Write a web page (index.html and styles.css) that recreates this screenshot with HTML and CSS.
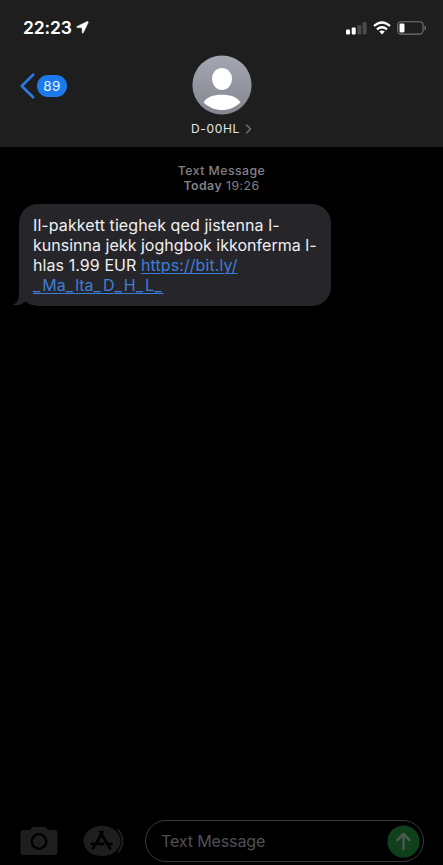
FILE: index.html
```html
<!DOCTYPE html>
<html lang="mt">
<head>
<meta charset="utf-8">
<title>Messages</title>
<link rel="stylesheet" href="styles.css">
</head>
<body>
<div class="phone">
  <header class="header">
    <div class="status">
      <span class="time">22:23</span>
      <svg class="location" width="13" height="13" viewBox="0 0 13 13"><path d="M11.2.6 1 5.400q-1 .8.1 1l4.900.3.3 5q.2 1.200 1 .1L12.200 1.600q.3-1.300-1-1z" fill="#fff" stroke="#fff" stroke-width=".5"/></svg>
      <svg class="signal" width="21" height="14" viewBox="0 0 21 14"><rect x="0" y="8.6" width="4" height="5" rx="1" fill="#fff"/><rect x="5.7" y="6.6" width="4" height="7" rx="1" fill="#fff"/><rect x="11.3" y="4" width="4" height="9.6" rx="1" fill="#4a4a4c"/><rect x="16.6" y="1" width="4" height="12.6" rx="1" fill="#4a4a4c"/></svg>
      <svg class="wifi" width="18" height="14" viewBox="0 0 18 14"><g fill="none" stroke="#fff" stroke-width="2.3"><path d="M1 5Q9-2 17 5"/><path d="M4 8.3q5-4.2 10 0"/></g><path d="M6.2 10.6Q9 8.3 11.8 10.6L9 13.5z" fill="#fff"/></svg>
      <svg class="battery" width="30" height="14" viewBox="0 0 30 14"><rect x=".7" y=".7" width="25.4" height="12.4" rx="3.6" fill="none" stroke="#77777a" stroke-width="1.1"/><rect x="2.5" y="2.4" width="5" height="9" rx="1.4" fill="#fff"/><path d="M27.5 4.5q1.6.8 1.6 2.4t-1.6 2.4z" fill="#77777a"/></svg>
    </div>
    <div class="nav">
      <div class="back">
        <svg width="16" height="26" viewBox="0 0 16 26"><path d="M13.1 1.8 1.8 13l11.3 11.2" fill="none" stroke="#2a78e0" stroke-width="2.7" stroke-linecap="round" stroke-linejoin="round"/></svg>
        <span class="badge">89</span>
      </div>
      <div class="contact">
        <svg width="60" height="60" viewBox="0 0 60 60">
          <defs><linearGradient id="g" x1="0" y1="0" x2="0" y2="1"><stop offset="0" stop-color="#a4a7b2"/><stop offset="1" stop-color="#83858f"/></linearGradient></defs>
          <circle cx="30" cy="30" r="29.6" fill="url(#g)"/>
          <ellipse cx="30" cy="23.9" rx="10" ry="11" fill="#fff"/>
          <path d="M11.5 47.5C14.5 42 21 39.7 30 39.7S45.5 42 48.5 47.5C43 52.5 37 55 30 55s-13-2.500-18.500-7.500z" fill="#fff"/>
        </svg>
        <div class="name"><span>D-00HL</span><svg width="7" height="10" viewBox="0 0 7 10"><path d="m1.300.8 4.200 4.200-4.200 4.200" fill="none" stroke="#77777a" stroke-width="1.300"/></svg></div>
      </div>
    </div>
  </header>
  <main class="thread">
    <div class="stamp"><div class="kind">Text Message</div><div class="when"><b>Today</b> 19:26</div></div>
    <div class="bubble">
      <svg class="tail" width="22" height="18" viewBox="0 0 22 18"><path d="M6 0v7Q6 14 0 17q8 1 13-4l9-4V0z" fill="#262529"/></svg>
      <div class="line l1">Il-pakkett tieghek qed jistenna l-</div>
      <div class="line l2">kunsinna jekk joghgbok ikkonferma l-</div>
      <div class="line l3">hlas 1.99 EUR <a>https://bit.ly/</a></div>
      <div class="line l4"><a><i>_</i>Ma<i>_</i>lta<i>_</i>D<i>_</i>H<i>_</i>L<i>_</i></a></div>
    </div>
  </main>
  <footer class="composer">
    <svg class="camera" width="38" height="30" viewBox="0 0 38 30"><path d="M3.500 4H10l2-2.500Q12.500 1 13.500 1h11q1 0 1.500.5L28 4h6.500Q37.500 4 37.500 7v19q0 3-3 3h-31q-3 0-3-3V7q0-3 3-3z" fill="#1e1e1f"/><circle cx="19" cy="15.500" r="7.300" fill="none" stroke="#000" stroke-width="2.300"/></svg>
    <svg class="apps" width="42" height="32" viewBox="0 0 42 32"><ellipse cx="19" cy="16" rx="18.500" ry="15.200" fill="#1e1e1f"/><path d="M35 4.500q9 11.500 0 23" fill="none" stroke="#1e1e1f" stroke-width="2"/><g fill="none" stroke="#000" stroke-width="2.700" stroke-linecap="round"><path d="M17.500 7 27 23.500M19.500 7 13.500 18M8.500 18.800h12M25 18.800h3.500M11.300 21.500 10 23.500"/></g></svg>
    <div class="field"><span>Text Message</span>
      <svg width="33" height="33" viewBox="0 0 33 33"><circle cx="16.500" cy="16.500" r="16.100" fill="#103f1b"/><path d="M16.500 24V9M10.500 15l6-6 6 6" fill="none" stroke="#4b5a4e" stroke-width="2.500" stroke-linecap="round" stroke-linejoin="round"/></svg>
    </div>
  </footer>
</div>
</body>
</html>
```
FILE: styles.css
```css
* { box-sizing: border-box; }
body { margin: 0; background: #000; font-family: Inter, "Liberation Sans", sans-serif; color: #fff; }
svg { display: block; flex: none; }
.phone { width: 443px; height: 865px; display: flex; flex-direction: column; overflow: hidden; background: #000; }
.header { height: 147px; flex: none; background: #1e1e1f; }
.status { height: 55px; display: flex; align-items: center; padding: 0 16px 0 23px; }
.time { font-size: 17.500px; font-weight: 600; letter-spacing: -.15px; width: 53px; white-space: nowrap; }
.signal { margin-left: auto; }
.wifi { margin-left: 6px; }
.battery { margin-left: 6px; }
.nav { display: grid; grid-template-columns: 1fr 100px 1fr; }
.back { display: flex; align-items: center; gap: 1px; padding-left: 20px; height: 61px; }
.badge { width: 30px; height: 22px; border-radius: 11px; background: #1b7bed; color: #e8f3ff; font-size: 13.500px; line-height: 22px; text-align: center; letter-spacing: .3px; }
.contact { display: flex; flex-direction: column; align-items: center; }
.name { display: flex; align-items: center; gap: 5px; margin-top: 5px; height: 17px; font-size: 12px; letter-spacing: .7px; color: #e6e6e8; white-space: nowrap; }
.thread { flex: 1; padding: 15.500px 0 0 19px; }
.stamp { margin-left: -19px; text-align: center; font-size: 12.300px; line-height: 15px; color: #808085; letter-spacing: .45px; }
.kind { font-weight: 500; }
.stamp b { font-weight: 600; }
.bubble { position: relative; width: 312px; height: 102px; margin-top: 11.500px; padding: 11px 0 0 14px; border-radius: 19px; background: #262529; }
.tail { position: absolute; left: -6px; bottom: 0; }
.line { position: relative; font-size: 16px; line-height: 20.100px; white-space: nowrap; color: #f0f0f2; }
.l1 { letter-spacing: .09px; }
.l2 { letter-spacing: .02px; }
.l3 { letter-spacing: .08px; }
.l4 i { font-style: normal; letter-spacing: 2.050px; }
.line a { color: #3c7fd9; text-decoration: underline; text-decoration-thickness: 1px; text-underline-offset: 2px; }
.composer { height: 46px; flex: none; display: flex; align-items: flex-start; padding: 1px 19px 0 20px; }
.camera { margin-top: 6px; }
.apps { margin: 5px 0 0 25px; }
.field { width: 279px; height: 42px; margin-left: auto; display: flex; align-items: center; justify-content: space-between; padding: 0 3px 0 15px; border: 1.500px solid #3a3a3c; border-radius: 21px; font-size: 16px; letter-spacing: -.12px; color: #505053; }
```
